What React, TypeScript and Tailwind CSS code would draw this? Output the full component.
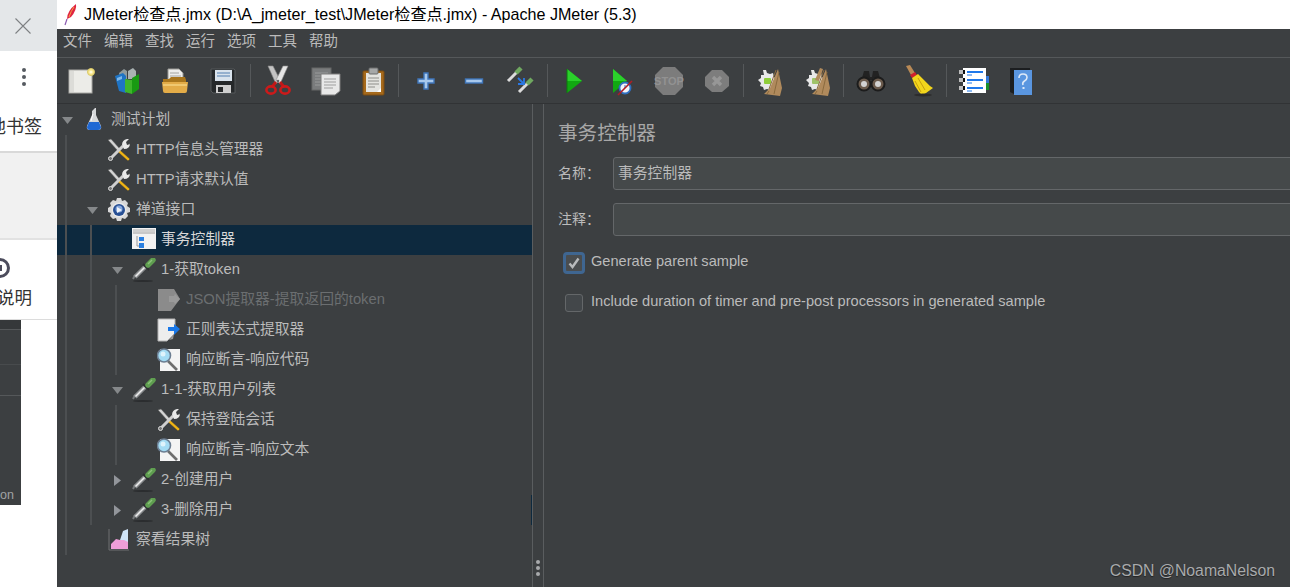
import type { ReactNode } from "react";

function Svg({ size = 32, children }: { size?: number; children: ReactNode }) {
  return (
    <svg width={size} height={size} viewBox={`0 0 ${size} ${size}`} className="block shrink-0">
      {children}
    </svg>
  );
}

/* toolbar icons, 32x32 */
const NewIcon = () => (
  <Svg>
    <rect x="4" y="5" width="23" height="23" fill="#ecece8" stroke="#a8a8a4" />
    <rect x="5" y="6" width="4" height="21" fill="#dcdcd8" />
    <circle cx="26" cy="7" r="3.5" fill="#f7e58a" stroke="#d8c866" />
    <circle cx="26" cy="7" r="1.6" fill="#fffbd8" />
  </Svg>
);
const TemplatesIcon = () => (
  <Svg>
    <path d="M7 8l5-4 3 2v8H8z" fill="#8f9a9c" />
    <path d="M16 6l5-3 3 3v8h-8z" fill="#a9b2b2" />
    <path d="M3 11l8-3 3 3v17l-7-2z" fill="#1f74c4" />
    <path d="M5 13l5-2v3l-5 2z" fill="#7db8ea" />
    <path d="M13 14l7 1v14l-7-2z" fill="#3fb52c" />
    <path d="M20 13l7-4v15l-7 5z" fill="#189a12" />
  </Svg>
);
const OpenIcon = () => (
  <Svg>
    <path d="M9 4h11l4 4v9H9z" fill="#ededea" stroke="#9a9a96" />
    <path d="M11 8h9M11 11h11M11 14h11" stroke="#a4a4a0" />
    <path d="M4 14h6l2-2h14l1 3v4H4z" fill="#a9761c" />
    <path d="M3 17h26l-1 9q0 2-2 2H6q-2 0-2-2z" fill="#e3ac48" />
    <path d="M4 19h24v2H4z" fill="#f0c870" />
  </Svg>
);
const SaveIcon = () => (
  <Svg>
    <path d="M4 4h23l1 1v23H6l-2-2z" fill="#25282a" stroke="#55585a" />
    <rect x="8" y="5" width="17" height="11" fill="#d8e2ec" />
    <path d="M10 8h13M10 11h13" stroke="#7fa0c4" strokeWidth="1.4" />
    <rect x="9" y="20" width="15" height="8" fill="#cfcfcf" />
    <rect x="11" y="22" width="5" height="5" fill="#26282a" />
  </Svg>
);
const CutIcon = () => (
  <Svg>
    <path d="M6 1l5 0 7 14-4 4z" fill="#c4c4c4" stroke="#8a8a8a" strokeWidth=".6" />
    <path d="M26 1l-5 0-7 14 4 4z" fill="#e6e6e6" stroke="#8a8a8a" strokeWidth=".6" />
    <circle cx="16" cy="16" r="1.3" fill="#666" />
    <path d="M14 17l-4 5" stroke="#c01818" strokeWidth="3" />
    <path d="M18 17l4 5" stroke="#c01818" strokeWidth="3" />
    <ellipse cx="9" cy="25" rx="4.6" ry="3.6" fill="none" stroke="#cc1a1a" strokeWidth="2.6" />
    <ellipse cx="23" cy="25" rx="4.6" ry="3.6" fill="none" stroke="#cc1a1a" strokeWidth="2.6" />
  </Svg>
);
const CopyIcon = () => (
  <Svg>
    <rect x="2" y="3" width="19" height="22" fill="#7a7c7d" stroke="#676869" />
    <path d="M5 8h13M5 11h13M5 14h13M5 17h13M5 20h13" stroke="#999b9c" />
    <path d="M11 9h13l6 0v17l-5 4H11z" fill="#e8e8e8" stroke="#7c7c7c" />
    <path d="M14 14h12M14 17h12M14 20h12M14 23h9" stroke="#9e9e9e" />
  </Svg>
);
const PasteIcon = () => (
  <Svg>
    <rect x="6" y="6" width="21" height="24" rx="1" fill="#a5691b" stroke="#7a4d12" />
    <rect x="9" y="8" width="15" height="19" fill="#e4e4e0" />
    <path d="M11 13h11M11 16h11M11 19h11M11 22h7" stroke="#8e8e8a" />
    <rect x="12" y="3" width="9" height="6" rx="1" fill="#a6a8a8" stroke="#6b6d6d" />
    <path d="M20 27l4-4v4z" fill="#fff" />
  </Svg>
);
const PlusIcon = () => (
  <Svg>
    <path d="M14 8h4v6h6v4h-6v6h-4v-6H8v-4h6z" fill="#a8c8ec" stroke="#3f76ba" strokeWidth="1.4" />
  </Svg>
);
const MinusIcon = () => (
  <Svg>
    <rect x="7.5" y="14" width="17" height="4" fill="#a8c8ec" stroke="#3f76ba" strokeWidth="1.4" />
  </Svg>
);
const ToggleIcon = () => (
  <Svg>
    <path d="M3 16l9-9" stroke="#dcdcdc" strokeWidth="3" />
    <path d="M11 8l5-5" stroke="#6fa860" strokeWidth="4.5" />
    <path d="M14 27l9-9" stroke="#dcdcdc" strokeWidth="3" />
    <path d="M22 19l5-5" stroke="#6fa860" strokeWidth="4.5" />
    <path d="M13 13l5 5M19 13v6h-6" fill="none" stroke="#2a78e4" strokeWidth="1.8" />
  </Svg>
);
const PlayIcon = () => (
  <Svg>
    <path d="M9 4l15 12-15 12z" fill="#11a811" />
    <path d="M9 4l15 12H9z" fill="#2bd02b" />
    <path d="M9 4v24" stroke="#0a7c0a" />
  </Svg>
);
const PlayNoTimerIcon = () => (
  <Svg>
    <path d="M7 4l14 12L7 28z" fill="#11a811" />
    <path d="M7 4l14 12H7z" fill="#2bd02b" />
    <circle cx="19" cy="23" r="5.5" fill="#f2f4f8" stroke="#2f6fc0" strokeWidth="1.8" />
    <path d="M19 23v-3" stroke="#2f6fc0" />
    <path d="M12 30L26 16" stroke="#b01c24" strokeWidth="1.6" />
  </Svg>
);
const StopIcon = () => (
  <Svg>
    <path d="M10 2h12l8 8v12l-8 8H10l-8-8V10z" fill="#7c7c7c" />
    <text x="16" y="20" textAnchor="middle" fontSize="11" fontWeight="700" fill="#929292" fontFamily="Liberation Sans, sans-serif">
      STOP
    </text>
  </Svg>
);
const ShutdownIcon = () => (
  <Svg>
    <path d="M11 5h10l7 7v9l-7 6H11l-7-6v-9z" fill="#7d7d7d" />
    <path d="M12 12l8 8M20 12l-8 8" stroke="#979797" strokeWidth="3.4" />
  </Svg>
);
const ClearIcon = ({ both = false }: { both?: boolean }) => (
  <Svg>
    <path d="M11 5l3 0 1 3 3 1 3-1 1 4 3 3-2 3 1 3-4 1-2 3-3-1-3 1-1-3-3-1 1-3-3-3 3-2 0-3 3 0z" fill="#e8e8e8" />
    <rect x="12" y="13" width="7" height="6" rx="1" fill={both ? "#9fc36a" : "#8fce3a"} />
    <path d="M26 4l-8 19-6 6 16 2 2-8z" fill="#b08a5c" />
    <path d="M24 5l-7 19M27 7l-5 22M17 26l-2 3" stroke="#8a6a3e" />
    {both && <path d="M20 3l-5 12 4 1 4-12z" fill="#b08a5c" />}
  </Svg>
);
const BinocularsIcon = () => (
  <Svg>
    <path d="M9 6h5l1 6h2l1-6h5l2 7h-7v2h-5v-2H7z" fill="#222" />
    <circle cx="9" cy="19" r="6.5" fill="#6a5a4c" stroke="#1c1c1c" strokeWidth="2" />
    <circle cx="23" cy="19" r="6.5" fill="#6a5a4c" stroke="#1c1c1c" strokeWidth="2" />
    <circle cx="9" cy="19" r="3" fill="#d2d2d2" />
    <circle cx="23" cy="19" r="3" fill="#d2d2d2" />
  </Svg>
);
const BroomIcon = () => (
  <Svg>
    <path d="M3 1l4-1 5 8-4 2z" fill="#b98a56" />
    <path d="M7 10l5-3 2 3-5 3z" fill="#d2202c" />
    <path d="M9 13l6-4 12 12 3 2-7 5-4 2-3-3-2-3-2-3z" fill="#f3d61c" />
    <path d="M15 13l7 12M12 16l6 11" stroke="#c79f0e" />
    <ellipse cx="20" cy="30" rx="9" ry="1.5" fill="#2c2c2c" />
  </Svg>
);
const FunctionIcon = () => (
  <Svg>
    <rect x="5" y="3" width="23" height="25" fill="#fff" />
    <rect x="28" y="11" width="3" height="7" fill="#3478d8" />
    <rect x="28" y="18" width="3" height="7" fill="#18902a" />
    <path d="M9 7h16M9 15h16M9 23h16" stroke="#1f78ea" strokeWidth="2" />
    <path d="M9 10h5M9 18h5M9 26h5" stroke="#1f78ea" />
    <rect x="1" y="5" width="4" height="4" fill="#bdbdbd" />
    <rect x="5" y="5" width="2" height="4" fill="#111" />
    <rect x="1" y="13" width="4" height="4" fill="#bdbdbd" />
    <rect x="5" y="13" width="2" height="4" fill="#111" />
    <rect x="1" y="21" width="4" height="4" fill="#bdbdbd" />
    <rect x="5" y="21" width="2" height="4" fill="#111" />
  </Svg>
);
const HelpIcon = () => (
  <Svg>
    <path d="M5 3h20v26H9l-4-2z" fill="#1c1e20" />
    <path d="M9 5h18v25H9z" fill="#5a96e0" />
    <path d="M14 13q0-4 4-4t4 3.5q0 2-2.5 3.5t-1.5 4" fill="none" stroke="#dce8f8" strokeWidth="1.6" />
    <rect x="17.5" y="22" width="2" height="2" fill="#dce8f8" />
  </Svg>
);

/* tree icons, 24x24 */
const FlaskIcon = () => (
  <Svg size={24}>
    <path d="M13 0l1 0v7l5 11q1 4-3 4H8q-4 0-3-4l5-11V3z" fill="#d6d8da" />
    <path d="M7 14h10l2 5q0 3-3 3H8q-3 0-3-3z" fill="#1f68d4" />
    <path d="M11 6l-2 7" stroke="#fff" />
  </Svg>
);
const ToolsIcon = () => (
  <Svg size={24}>
    <path d="M1 2l3-1 9 10-2 2z" fill="#d4d4d4" stroke="#5c5c5c" strokeWidth=".5" />
    <path d="M13 12l10 9-2 2-10-9z" fill="#f0b414" stroke="#3a3a3a" strokeWidth=".5" />
    <path d="M3 21L16 8" stroke="#cfcfcf" strokeWidth="3" />
    <path d="M15 7q0-5 5-6l2 0-3 3 1 3 3-1 0-1q0 6-6 6z" fill="#e8e8e8" />
    <circle cx="3.5" cy="20.5" r="2" fill="#777" stroke="#ddd" />
  </Svg>
);
const GearIcon = () => (
  <Svg size={24}>
    <path d="M10 0h4l1 3 3-1 3 3-1 3 3 2v4l-3 1 1 3-3 3-3-1-1 3h-4l-1-3-3 1-3-3 1-3-3-1v-4l3-2-1-3 3-3 3 1z" fill="#d8d8d8" />
    <circle cx="12" cy="12" r="7.5" fill="#e8e8e8" />
    <circle cx="12" cy="12" r="6" fill="#274f94" />
    <circle cx="12" cy="11" r="3.5" fill="#88a8dc" />
    <path d="M10 9l5 3-5 3z" fill="#f0f4fa" />
  </Svg>
);
const TransactionIcon = () => (
  <Svg size={24}>
    <rect x="0" y="0" width="24" height="21" fill="#f2f2f2" />
    <rect x="1" y="1" width="22" height="3" fill="#d0d0d0" />
    <path d="M1 5h22" stroke="#9e9e9e" />
    <rect x="7" y="9" width="5" height="4" fill="#2a7fe0" />
    <rect x="7" y="15" width="5" height="5" fill="#2a7fe0" />
    <path d="M5 8v10h2" fill="none" stroke="#9a9a9a" />
  </Svg>
);
const DropperIcon = () => (
  <Svg size={24}>
    <ellipse cx="11" cy="23" rx="10" ry="1" fill="#2b2d2f" />
    <path d="M1 21l2-4" stroke="#777a7c" strokeWidth="2" />
    <path d="M3 19l10-10" stroke="#8b8e90" strokeWidth="4.4" />
    <path d="M3.5 18.5l9-9" stroke="#eeeeee" strokeWidth="1.6" />
    <path d="M11 6l6 6" stroke="#2c2e30" strokeWidth="1.8" />
    <path d="M16 7l5-5" stroke="#5f9e50" strokeWidth="5.4" strokeLinecap="round" />
    <path d="M16 6l4-4" stroke="#8cc47a" strokeWidth="1.4" />
  </Svg>
);
const JsonIcon = () => (
  <Svg size={24}>
    <path d="M1 1h16l6 10-6 8-3 4H1z" fill="#8b8b8b" />
    <path d="M12 8h5l1-2 5 5-5 5-1-2h-5z" fill="#9a9a9a" />
  </Svg>
);
const RegexIcon = () => (
  <Svg size={24}>
    <path d="M1 1h17v14l-8 8H1z" fill="#ededed" stroke="#b4b4b4" />
    <path d="M11 9h6V6l6 5-6 6v-4h-6z" fill="#1a78e8" />
    <path d="M12 22l5-6-1 5z" fill="#989898" />
  </Svg>
);
const AssertIcon = () => (
  <Svg size={24}>
    <rect x="3" y="1" width="20" height="22" fill="#f4f4f4" />
    <path d="M11 13l9 9" stroke="#6e6e6e" strokeWidth="2.6" />
    <circle cx="7" cy="7.5" r="6.5" fill="#a4dcf4" stroke="#6c7e92" strokeWidth="1.6" />
    <circle cx="6" cy="6" r="2.5" fill="#dff4fc" />
  </Svg>
);
const GraphIcon = () => (
  <Svg size={24}>
    <path d="M2 1v21h20" fill="none" stroke="#6e7072" />
    <path d="M4 21v-5l5-5 4 1 8-1v10z" fill="#ef9ed8" />
    <path d="M13 12l3-9 5-2v13l-4-2z" fill="#cfe4f8" />
  </Svg>
);

type ToolEntry = { node: ReactNode; w: string } | { sep: string };
const toolbar: ToolEntry[] = [
  { node: <NewIcon />, w: "w-[46px]" },
  { node: <TemplatesIcon />, w: "w-[47px]" },
  { node: <OpenIcon />, w: "w-[48px]" },
  { node: <SaveIcon />, w: "w-[48px]" },
  { sep: "w-[7px] pl-[3px]" },
  { node: <CutIcon />, w: "w-[48px]" },
  { node: <CopyIcon />, w: "w-[47px]" },
  { node: <PasteIcon />, w: "w-[47px]" },
  { sep: "w-[6px] pl-[2px]" },
  { node: <PlusIcon />, w: "w-[48px]" },
  { node: <MinusIcon />, w: "w-[47px]" },
  { node: <ToggleIcon />, w: "w-[47px]" },
  { sep: "w-[6px] pl-[3px]" },
  { node: <PlayIcon />, w: "w-[48px]" },
  { node: <PlayNoTimerIcon />, w: "w-[47px]" },
  { node: <StopIcon />, w: "w-[48px]" },
  { node: <ShutdownIcon />, w: "w-[48px]" },
  { sep: "w-[3px] pl-[2px]" },
  { node: <ClearIcon />, w: "w-[48px]" },
  { node: <ClearIcon both />, w: "w-[48px]" },
  { sep: "w-[7px] pl-[3px]" },
  { node: <BinocularsIcon />, w: "w-[48px]" },
  { node: <BroomIcon />, w: "w-[48px]" },
  { sep: "w-[7px] pl-[3px]" },
  { node: <FunctionIcon />, w: "w-[47px]" },
  { node: <HelpIcon />, w: "w-[47px]" },
];

type Row = {
  label: string;
  icon: ReactNode;
  guides: number;
  arrow?: "down" | "right";
  selected?: boolean;
  disabled?: boolean;
};

const rows: Row[] = [
  { label: "测试计划", icon: <FlaskIcon />, guides: 0, arrow: "down" },
  { label: "HTTP信息头管理器", icon: <ToolsIcon />, guides: 1 },
  { label: "HTTP请求默认值", icon: <ToolsIcon />, guides: 1 },
  { label: "禅道接口", icon: <GearIcon />, guides: 1, arrow: "down" },
  { label: "事务控制器", icon: <TransactionIcon />, guides: 2, selected: true },
  { label: "1-获取token", icon: <DropperIcon />, guides: 2, arrow: "down" },
  { label: "JSON提取器-提取返回的token", icon: <JsonIcon />, guides: 3, disabled: true },
  { label: "正则表达式提取器", icon: <RegexIcon />, guides: 3 },
  { label: "响应断言-响应代码", icon: <AssertIcon />, guides: 3 },
  { label: "1-1-获取用户列表", icon: <DropperIcon />, guides: 2, arrow: "down" },
  { label: "保持登陆会话", icon: <ToolsIcon />, guides: 3 },
  { label: "响应断言-响应文本", icon: <AssertIcon />, guides: 3 },
  { label: "2-创建用户", icon: <DropperIcon />, guides: 2, arrow: "right" },
  { label: "3-删除用户", icon: <DropperIcon />, guides: 2, arrow: "right" },
  { label: "察看结果树", icon: <GraphIcon />, guides: 1 },
];

function TreeRow({ row }: { row: Row }) {
  return (
    <div className={`flex h-[30px] items-center ${row.selected ? "bg-[#0d293e]" : ""}`}>
      {Array.from({ length: row.guides }).map((_, i) => (
        <div key={i} className="h-full w-[25px] shrink-0 pl-[8px]">
          <div className="h-full w-[2px] bg-[#4c4f51]" />
        </div>
      ))}
      <div className="flex w-[25px] shrink-0 pl-[5px]">
        {row.arrow === "down" && (
          <svg width="11" height="7" viewBox="0 0 11 7" className="block">
            <path d="M0 0h11L5.5 7z" fill="#85888a" />
          </svg>
        )}
        {row.arrow === "right" && (
          <svg width="7" height="11" viewBox="0 0 7 11" className="ml-[2px] block">
            <path d="M0 0l7 5.5L0 11z" fill="#92959a" />
          </svg>
        )}
      </div>
      {row.icon}
      <span
        className={`mb-[2px] ml-[5px] whitespace-nowrap text-[14.8px] leading-none ${
          row.disabled ? "text-[#6b6e70]" : row.selected ? "text-[#d8d8d8]" : "text-[#bbbbbb]"
        }`}
      >
        {row.label}
      </span>
    </div>
  );
}

export default function App() {
  return (
    <div className="relative flex h-[587px] w-[1290px] overflow-hidden bg-white font-['Liberation_Sans','Noto_Sans_CJK_SC',sans-serif]">
      {/* browser window behind */}
      <div className="flex w-[57px] shrink-0 flex-col overflow-hidden bg-white">
        <div className="flex h-[51px] items-center bg-[#e4e7e9] pl-[15px]">
          <svg width="16" height="16" viewBox="0 0 16 16" className="block">
            <path d="M0.5 0.5l15 15M15.5 0.5l-15 15" stroke="#7d8083" strokeWidth="1.1" />
          </svg>
        </div>
        <div className="relative h-[102px] border-b-2 border-[#d9d9d9]">
          <div className="absolute left-[22px] top-[17px] flex flex-col gap-[3px]">
            <span className="h-[4px] w-[4px] rounded-full bg-[#555a60]" />
            <span className="h-[4px] w-[4px] rounded-full bg-[#555a60]" />
            <span className="h-[4px] w-[4px] rounded-full bg-[#555a60]" />
          </div>
          <div className="absolute right-[15px] top-[64px] whitespace-nowrap text-[18px] leading-6 text-[#333]">
            地书签
          </div>
        </div>
        <div className="h-[87px] border-b-2 border-[#e2e2e2] bg-[#f1f1f1]" />
        <div className="h-[80px] overflow-hidden border-b border-[#dcdcdc] pt-[18px]">
          <div className="-ml-[10px] flex h-[20px] w-[20px] items-center justify-center rounded-full border-[3px] border-[#4c4c5c]">
            <span className="ml-[2px] h-[6px] w-[2px] bg-[#4c4c5c]" />
          </div>
          <div className="mt-[8px] flex w-[32px] justify-end whitespace-nowrap text-[17.5px] leading-6 text-[#333]">
            说明
          </div>
        </div>
        <div className="flex h-[185px] w-[21px] flex-col overflow-hidden bg-[#3c3f41]">
          <div className="h-[10px] shrink-0 border-b border-[#55585a] bg-[#35383a]" />
          <div className="h-[35px] shrink-0 border-b border-[#484b4d]" />
          <div className="h-[31px] shrink-0 border-b border-[#55585a]" />
          <div className="flex-1" />
          <div className="mb-[2px] text-[12.5px] leading-4 text-[#a0a2a4]">on</div>
        </div>
      </div>

      {/* JMeter window */}
      <div className="flex min-w-0 flex-1 flex-col">
        <div className="flex h-[29px] shrink-0 items-center bg-white pl-[5px]">
          <svg width="16" height="22" viewBox="0 0 16 22" className="block">
            <path d="M14 0q1 6-5 13l-4 2q0-8 9-15z" fill="#e02440" />
            <path d="M12 3q-3 4-5 10" stroke="#f3a044" fill="none" />
            <path d="M5 15l-2 6" stroke="#8a5ab0" strokeWidth="1.2" />
          </svg>
          <span className="ml-[6px] whitespace-nowrap text-[16.1px] text-black">
            JMeter检查点.jmx (D:\A_jmeter_test\JMeter检查点.jmx) - Apache JMeter (5.3)
          </span>
        </div>

        <div className="flex h-[29px] shrink-0 items-center gap-[12px] border-b border-[#55585a] bg-[#3c3f41] pb-[2px] pl-[6px] text-[14.5px] text-[#bbbbbb]">
          {["文件", "编辑", "查找", "运行", "选项", "工具", "帮助"].map((m) => (
            <span key={m}>{m}</span>
          ))}
        </div>

        <div className="flex h-[46px] shrink-0 items-center border-b border-[#313335] bg-[#3c3f41] pl-px">
          {toolbar.map((t, i) =>
            "sep" in t ? (
              <div key={i} className={`flex h-[33px] shrink-0 ${t.sep}`}>
                <div className="h-full w-px bg-[#55585a]" />
              </div>
            ) : (
              <div key={i} className={`flex shrink-0 justify-center ${t.w}`}>
                {t.node}
              </div>
            ),
          )}
        </div>

        <div className="flex min-h-0 flex-1 bg-[#3c3f41]">
          {/* tree */}
          <div className="w-[475px] shrink-0 overflow-hidden pt-px">
            {rows.map((r) => (
              <TreeRow key={r.label} row={r} />
            ))}
          </div>

          {/* split bar */}
          <div className="relative flex w-[12px] shrink-0 flex-col justify-end border-x border-[#5a5d5f] pb-[11px] pl-[3px]">
            <div className="flex flex-col gap-[2px]">
              <span className="h-[4px] w-[4px] rounded-full bg-[#a8aaac]" />
              <span className="h-[4px] w-[4px] rounded-full bg-[#a8aaac]" />
              <span className="h-[4px] w-[4px] rounded-full bg-[#a8aaac]" />
            </div>
            <div className="absolute -left-[2px] top-[391px] h-[30px] w-px bg-[#0d293e]" />
          </div>

          {/* details */}
          <div className="min-w-0 flex-1 overflow-hidden pl-[14px] pt-[15px]">
            <div className="text-[19.6px] leading-[28px] text-[#a8a8a8]">事务控制器</div>
            <div className="mt-[10px] flex h-[33px] items-center">
              <span className="w-[55px] shrink-0 text-[14px] text-[#bbbbbb]">名称：</span>
              <div className="flex h-full w-[800px] shrink-0 items-center rounded-[3px] border border-[#646769] bg-[#45494a] pl-[4px] text-[14.8px] text-[#bbbbbb]">
                事务控制器
              </div>
            </div>
            <div className="mt-[13px] flex h-[33px] items-center">
              <span className="w-[55px] shrink-0 text-[14px] text-[#bbbbbb]">注释：</span>
              <div className="h-full w-[800px] shrink-0 rounded-[3px] border border-[#646769] bg-[#45494a]" />
            </div>
            <div className="mt-[16px] flex h-[22px] items-center pl-[5px]">
              <div className="flex h-[22px] w-[22px] items-center justify-center rounded-[4px] border-[3px] border-[#3f6691] bg-[#4a4d4f]">
                <svg width="12" height="12" viewBox="0 0 12 12" className="block">
                  <path d="M1.5 6.5l3 3.5 6-8.5" fill="none" stroke="#b8babc" strokeWidth="2.4" />
                </svg>
              </div>
              <span className="mb-[2px] ml-[6px] text-[14.6px] text-[#bbbbbb]">Generate parent sample</span>
            </div>
            <div className="mt-[18px] flex h-[22px] items-center pl-[7px]">
              <div className="h-[18px] w-[18px] rounded-[3px] border border-[#646769] bg-[#43474a]" />
              <span className="mb-[2px] ml-[8px] whitespace-nowrap text-[14.6px] text-[#bbbbbb]">
                Include duration of timer and pre-post processors in generated sample
              </span>
            </div>
          </div>
        </div>
      </div>

      <div className="absolute right-[15px] top-[561px] text-[15.8px] leading-5 text-[#a8aaac] [text-shadow:0_1px_1px_#222]">
        CSDN @NoamaNelson
      </div>
    </div>
  );
}
